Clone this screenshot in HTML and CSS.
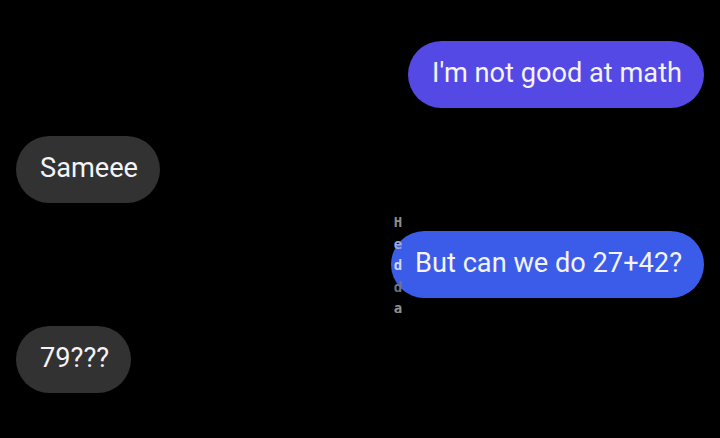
FILE: index.html
```html
<!DOCTYPE html>
<html>
<head>
<meta charset="utf-8">
<link rel="stylesheet" href="styles.css">
</head>
<body>
<div class="chat">
  <div class="row out"><div class="bubble purple">I'm not good at math</div></div>
  <div class="row in"><div class="bubble gray">Sameee</div></div>
  <div class="row out">
    <div class="bubble blue">
      <div class="tag"><span class="h">H</span><span class="e">e</span><span class="d1">d</span><span class="d2">d</span><span class="a">a</span></div>
      But can we do 27+42?
    </div>
  </div>
  <div class="row in"><div class="bubble gray">79???</div></div>
</div>
</body>
</html>
```
FILE: styles.css
```css
html, body {
  margin: 0;
  background: #000;
  width: 720px;
  height: 438px;
  overflow: hidden;
}
.chat {
  display: flex;
  flex-direction: column;
  gap: 28px;
  padding: 41px 16px 0 16px;
  font-family: Roboto, "Noto Sans", sans-serif;
}
.row {
  display: flex;
}
.row.out { justify-content: flex-end; }
.row.in { justify-content: flex-start; }
.bubble {
  position: relative;
  height: 67px;
  box-sizing: border-box;
  display: flex;
  align-items: center;
  padding: 0 22px 3px 24px;
  border-radius: 34px;
  color: #f4f4f8;
  font-size: 27.2px;
  white-space: nowrap;
}
.purple { background: #5549e6; }
.blue { background: #3b5ce9; }
.gray { background: #323232; }
.tag {
  position: absolute;
  left: 1px;
  top: -19px;
  display: flex;
  flex-direction: column;
  align-items: center;
  width: 12px;
  font-family: "DejaVu Sans Mono", monospace;
  font-weight: bold;
  font-size: 14px;
  line-height: 21.5px;
}
.tag .h { color: #8e8e8e; }
.tag .e { color: #a0aada; }
.tag .d1 { color: #cfd6f6; }
.tag .d2 { color: #70737f; }
.tag .a { color: #929292; }
```
